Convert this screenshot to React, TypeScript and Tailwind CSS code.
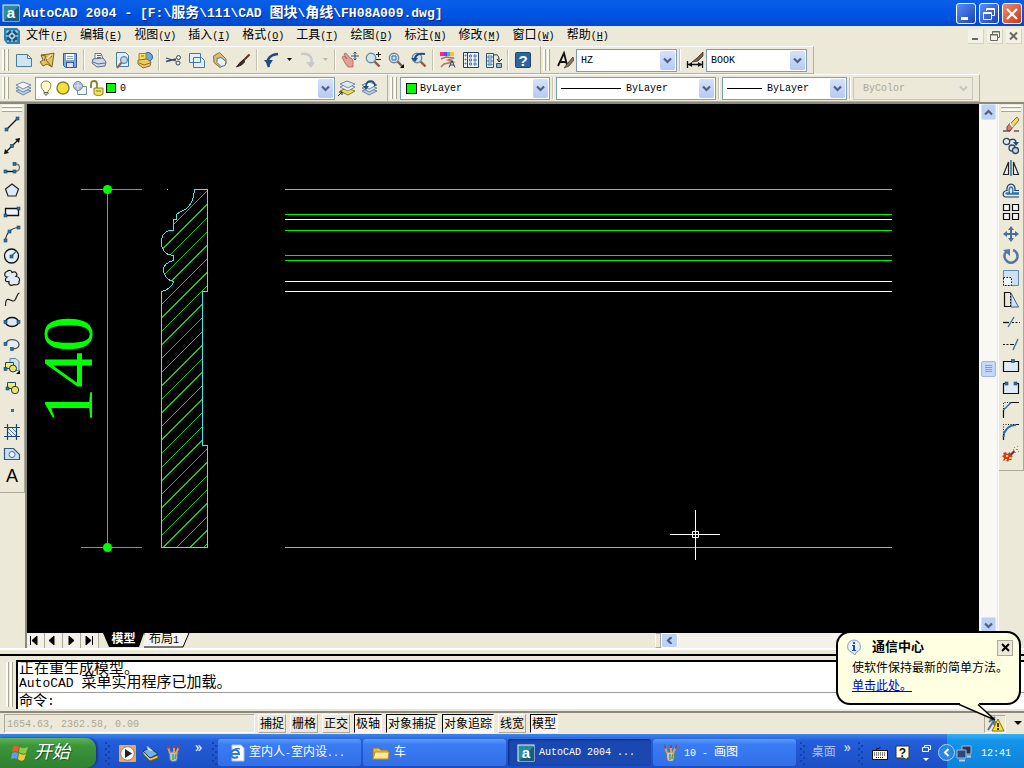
import React from 'react';

const SHADE = '#33495f';
const BLUE = '#2f6ea5';
const PALE = '#d3e3f5';

// CJK runs are set a little larger than the monospaced latin around them
const Mixed: React.FC<{ text: string; cjk?: string }> = ({ text, cjk = 'text-[12px]' }) => (
  <>
    {text.split(/([\u3000-\u9fff]+)/).map((part, i) =>
      i % 2 ? <span key={i} className={cjk}>{part}</span> : part
    )}
  </>
);

const Icon: React.FC<{ children: React.ReactNode }> = ({ children }) => (
  <svg width="18" height="18" viewBox="0 0 18 18" fill="none" stroke={SHADE} className="block shrink-0">
    {children}
  </svg>
);

const Node: React.FC<{ x: number; y: number }> = ({ x, y }) => (
  <rect x={x - 1.5} y={y - 1.5} width="3" height="3" fill={BLUE} stroke="#17456f" strokeWidth="0.6" />
);

const lens = (
  <>
    <path d="M10.5 10.5l5 5" stroke="#8b5a3c" strokeWidth="2.4" />
    <circle cx="7" cy="7" r="4.7" fill={PALE} stroke="#71889c" strokeWidth="1.4" />
  </>
);

const layerStack = (
  <>
    <path d="M1 12l7-3 8 3-8 4z" fill="#b9cde0" stroke="#54748f" strokeWidth="0.8" />
    <path d="M1 9l7-3 8 3-8 4z" fill="#d7e4ef" stroke="#54748f" strokeWidth="0.8" />
    <path d="M1 6l7-3 8 3-8 4z" fill="#eef4fa" stroke="#54748f" strokeWidth="0.8" />
  </>
);

type Tool = { name: string; art: React.ReactNode };

const fileTools: Tool[] = [
  { name: '新建', art: <path d="M1.5 3.5h11l4 4v8h-15zM12.5 3.5v4h4" fill="#cfe5f3" stroke="#4b7d9c" /> },
  {
    name: '打开',
    art: (
      <>
        <path d="M3 4l8-1 5-1-2 14-5-3-4 2-3-4 3-2z" fill="#e3c262" stroke="#7d6428" />
        <path d="M3 4l5 1-2 5M8 9l6 7M8 9l6-4" stroke="#7d6428" />
        <path d="M13 4l-4 4" stroke="#fff3b5" strokeWidth="1.500" />
      </>
    ),
  },
  {
    name: '保存',
    art: (
      <>
        <path d="M2.500 2.500h13v14h-11l-2-2z" fill="#7fa8d6" stroke="#315d92" />
        <rect x="5" y="3" width="8" height="6" fill="#f5f8fc" stroke="none" />
        <path d="M6 5.500h6M6 7.500h6" stroke="#8aa3bd" />
        <rect x="5.500" y="11.500" width="7" height="5" fill="#dbe5f0" stroke="#315d92" />
      </>
    ),
  },
];

const printTools: Tool[] = [
  {
    name: '打印',
    art: (
      <>
        <path d="M5 8V2.500h6l2 5" fill="#fff" stroke="#65758d" />
        <path d="M3 8l10-1 3 4-1 4-8 1-5-4z" fill="#d2d9ea" stroke="#5e6d8a" />
        <path d="M3 11l5 2 7-1M7 4.500h4M7 6.500h4" stroke="#5e6d8a" />
      </>
    ),
  },
  {
    name: '打印预览',
    art: (
      <>
        <path d="M3.500 1.500h9l3 3v11h-12z" fill="#e3effa" stroke="#4679a1" />
        <path d="M9 11l-5 6" stroke="#995f3f" strokeWidth="2" />
        <circle cx="11" cy="9" r="3.500" fill="#bfd8ee" stroke="#52728f" />
      </>
    ),
  },
  {
    name: '发布',
    art: (
      <>
        <circle cx="12" cy="6" r="4.500" fill="#6ba9df" stroke="#31639b" />
        <path d="M3 9V2.500h7V9" fill="#f8df55" stroke="#a2842a" />
        <path d="M2 9l9-1 4 3-1 4-7 2-5-4z" fill="#eccb63" stroke="#8a6d2d" />
        <path d="M3 12l5 2 6-2M5 5h3" stroke="#8a6d2d" />
      </>
    ),
  },
];

const editTools: Tool[] = [
  {
    name: '剪切',
    art: (
      <>
        <path d="M1 7l10 3M1 10.500l10-2.500" strokeWidth="1.300" />
        <circle cx="13.500" cy="6.500" r="2" />
        <circle cx="13" cy="12" r="2" />
      </>
    ),
  },
  {
    name: '复制',
    art: <path d="M1.500 2.500h11v9h-11zM5.500 6.500h8l3 3v7h-11z" fill="#e2effa" stroke="#42799f" />,
  },
  {
    name: '粘贴',
    art: (
      <>
        <path d="M2.500 5l6-3.500L15 8v5l-6 3.500-6-5z" fill="#dfbc6d" stroke="#8b6e39" />
        <path d="M6 7.500l4-1 5 4-1 4-4 1-4-4z" fill="#e8f2fb" stroke="#4a7b9e" />
      </>
    ),
  },
  {
    name: '特性匹配',
    art: (
      <>
        <path d="M15.500 3.500L9 10" stroke="#59391f" strokeWidth="2.200" />
        <path d="M9.500 9l-3 2-4 5 5-2 3-3z" fill="#3c2b22" stroke="#2a211c" />
      </>
    ),
  },
];

const viewTools: Tool[] = [
  {
    name: '实时平移',
    art: (
      <>
        <path d="M1 6l2-1 3 3-3-5 2-1 4 5 1 0 2 2v7l-5 0-3-4z" fill="#e0a197" stroke="#a96055" strokeWidth="0.8" />
        <path d="M14 1v8M10 5h8M12.500 2.500L14 1l1.500 1.500M12.500 7.500L14 9l1.500-1.500" stroke="#2b5177" />
      </>
    ),
  },
  { name: '实时缩放', art: <>{lens}<path d="M14.500 1v5M12 3.500h5M12 8.500h5" stroke="#222" /></> },
  { name: '窗口缩放', art: <>{lens}<path d="M5 5h4v4H5z" stroke={BLUE} /><path d="M13 17l4-4v4z" fill="#000" stroke="none" /></> },
  {
    name: '缩放上一个',
    art: (
      <>
        {lens}
        <path d="M5 8c0-4 4-6 10-5" stroke="#204d7d" strokeWidth="2.200" />
        <path d="M1 7h7l-3 4z" fill="#204d7d" stroke="none" />
      </>
    ),
  },
];

const paletteTools: Tool[] = [
  {
    name: '特性',
    art: (
      <>
        <g stroke="none">
          <path d="M1 1h4v4H1z" fill="#f32d8b" />
          <path d="M5 1h3v4H5z" fill="#8536e8" />
          <path d="M8 1h3v4H8z" fill="#25b7ee" />
          <path d="M11 1h4v4h-4z" fill="#f7c424" />
        </g>
        <path d="M2 8l5-2 8 1-6 2 5 2-9 2-3 3" stroke="#b07568" strokeWidth="1.600" />
        <path d="M10 16.500l3-7 3 7M11 14h4" stroke="#28455f" />
      </>
    ),
  },
  {
    name: '设计中心',
    art: (
      <>
        <path d="M1.500 1.500h15v15h-15z" fill="#eef4fb" stroke="#1f3f66" />
        <path d="M5.500 1.500v15" stroke="#1f3f66" />
        <path d="M7.500 4h2v2h-2zM12 4h2v2h-2zM7.500 8h2v2h-2zM12 8h2v2h-2zM7.500 12h2v2h-2zM12 12h2v2h-2zM3 4h1v1H3zM3 8h1v1H3zM3 12h1v1H3z" stroke="#426b96" strokeWidth="0.900" />
      </>
    ),
  },
  {
    name: '工具选项板',
    art: (
      <>
        <path d="M1.500 2.500h7v14h-7z" fill="#e4eef8" stroke="#2a4f78" />
        <path d="M3 5h4v2H3zM3 9h4v2H3zM3 13h4v1H3z" stroke="#527ba4" />
        <path d="M9 4c4-1 5 1 5 6M12 8l2 3 3-3" stroke="#17283b" />
        <path d="M11.500 12.500h5v4h-5z" fill="#94b3d5" stroke="#33526f" />
      </>
    ),
  },
];

const drawTools: Tool[] = [
  { name: '直线', art: <><path d="M3.500 14.500l11-11" stroke="#111" strokeWidth="1.300" /><Node x={3.5} y={14.5} /><Node x={14.5} y={3.5} /></> },
  {
    name: '构造线',
    art: (
      <>
        <path d="M2 16L16 2" stroke="#111" strokeWidth="1.300" />
        <path d="M1 17l1-5 4 4zM17 1l-5 1 4 4z" fill="#111" stroke="none" />
        <Node x={9} y={9} />
      </>
    ),
  },
  { name: '多段线', art: <><path d="M2.500 12.500h9" stroke="#111" strokeWidth="1.400" /><path d="M12 5c6 0 6 7 0 7.500" stroke="#777" strokeWidth="1.400" /><Node x={2.5} y={12.5} /><Node x={11.5} y={12.5} /><Node x={11.5} y={5} /></> },
  { name: '正多边形', art: <path d="M9 3l6.500 5-2.500 7H5L2.500 8z" fill="#e0eaf7" stroke="#222" strokeWidth="1.200" /> },
  { name: '矩形', art: <><path d="M2.500 5.500h13v7h-13z" fill="#f0f5fc" stroke="#111" strokeWidth="1.300" /><Node x={2.5} y={12.5} /><Node x={15.5} y={5.5} /></> },
  { name: '圆弧', art: <><path d="M2.500 15.500C3 8 8 3 15.500 2.500" stroke="#333" strokeWidth="1.200" /><Node x={2.5} y={15.5} /><Node x={6.5} y={6.5} /><Node x={15.5} y={2.5} /></> },
  { name: '圆', art: <><circle cx="8.500" cy="9" r="7" fill="#e2edf9" stroke="#111" strokeWidth="1.300" /><path d="M8.500 9l5-5" stroke={BLUE} strokeWidth="1.400" /><Node x={8.5} y={9.5} /></> },
  {
    name: '修订云线',
    art: <path d="M4 8C1 8 1 3 4 2.500c2-2 5-1 5 1 4-2 6 2 4 4 4 0 4 4 3 5 1 3-3 4-5 3-3 2-6 0-5-3-5 1-4-3-2-4.500z" fill="#e3ebf8" stroke="#222" strokeWidth="1.200" />,
  },
  { name: '样条曲线', art: <path d="M2.500 15c0-11 5-5 8-5s3-8 6-8" stroke="#222" strokeWidth="1.200" /> },
  { name: '椭圆', art: <><ellipse cx="9" cy="9" rx="6.500" ry="4.500" fill="#dce8f7" stroke="#111" strokeWidth="1.400" /><Node x={2.5} y={9} /><Node x={15.5} y={9} /></> },
  { name: '椭圆弧', art: <><path d="M3 9c0-6 13-6 13 1 0 3-4 4-7 3.500" fill="#e4eef9" stroke="#555" strokeWidth="1.400" /><Node x={2.5} y={9} /><Node x={9} y={14} /></> },
  {
    name: '插入块',
    art: (
      <>
        <path d="M7 1.500h6l3 3v9H7z" fill="#cde0f2" stroke="#5c86ac" />
        <path d="M2.500 5.500h8v6h-8z" fill="#f2ed69" stroke="#1d466f" />
        <circle cx="10" cy="11.500" r="3.500" fill="#e8e36b" stroke="#333" />
        <Node x={2.5} y={12} />
        <path d="M13 17l4-4v4z" fill="#000" stroke="none" />
      </>
    ),
  },
  { name: '创建块', art: <><path d="M4.500 3.500h8v6h-8z" fill="#f2ed69" stroke="#1d466f" /><circle cx="12" cy="11" r="3.700" fill="#e8e36b" stroke="#333" /><Node x={4.5} y={9.5} /></> },
  { name: '点', art: <rect x="8" y="8" width="3" height="3" fill={BLUE} stroke="none" /> },
  {
    name: '图案填充',
    art: (
      <>
        <path d="M4 4h10v10H4z" fill="#e5effa" stroke="none" />
        <path d="M4 4l10 10M8 4l6 6M4 8l6 6M12 4l2 2M4 12l2 2" stroke="#47749f" />
        <path d="M1 4.500h16M1 13.500h16M4.500 1v16M13.500 1v16" stroke="#1f4266" strokeWidth="1.200" />
      </>
    ),
  },
  { name: '面域', art: <><path d="M1.500 3.500h9l6 6v5h-15z" fill="#cbdff2" stroke="#2b5a85" strokeWidth="1.200" /><circle cx="9" cy="9.500" r="3" fill="#e9f1fa" stroke="#4a6f92" /></> },
];

const modifyTools: Tool[] = [
  {
    name: '删除',
    art: (
      <>
        <path d="M1 16h7M12 16h5" stroke="#111" />
        <path d="M9 8l6-6 2 3-6 7z" fill="#f5d95e" stroke="#83702c" />
        <path d="M5 12l3-4 3 4-3 4-3-1z" fill="#d97a76" stroke="#7d3b37" />
        <path d="M8 8l3 4" stroke="#fff" strokeWidth="1.500" />
      </>
    ),
  },
  {
    name: '复制对象',
    art: (
      <>
        <circle cx="4.500" cy="4.500" r="3.200" fill="#dfe6ee" strokeWidth="1.300" />
        <circle cx="10" cy="11" r="3" fill="#dfe6ee" strokeWidth="1.300" />
        <circle cx="13.500" cy="13.500" r="3" fill="#c8d4e1" strokeWidth="1.300" />
        <path d="M8 3c4-2 6 0 6 3" stroke="#174f84" strokeWidth="1.500" />
        <path d="M11 5h6l-3 4z" fill="#174f84" stroke="none" />
      </>
    ),
  },
  { name: '镜像', art: <><path d="M6.500 3v12.500h-5zM11.500 3v12.500h5z" fill="#eef2f6" stroke="#222" strokeWidth="1.200" /><path d="M9 1v16" stroke={BLUE} strokeWidth="1.500" /></> },
  {
    name: '偏移',
    art: (
      <>
        <path d="M17 16H4c-4 0-4-6 1-6.500C4 1 14 1 13 9.500h4" fill="#dce9f6" stroke="#243b54" strokeWidth="1.200" />
        <path d="M17 13H5c-2-.5-1-1.500 2.500-1-2-8 5-8 3 0H17" stroke={BLUE} strokeWidth="1.300" />
      </>
    ),
  },
  { name: '阵列', art: <path d="M1.500 1.500h6v6h-6zM10.500 1.500h6v6h-6zM1.500 10.500h6v6h-6zM10.500 10.500h6v6h-6z" fill="#f2f5f9" stroke="#111" strokeWidth="1.200" /> },
  { name: '移动', art: <><path d="M9 3v12M3 9h12" stroke="#486e9c" strokeWidth="2" /><path d="M9 1l3 4H6zM9 17l3-4H6zM1 9l4-3v6zM17 9l-4-3v6z" fill="#486e9c" stroke="none" /></> },
  { name: '旋转', art: <><path d="M4 5a6.500 6.500 0 1 0 7-2" stroke="#5576a0" strokeWidth="2.500" /><path d="M1 3l7-1v7z" fill="#5576a0" stroke="none" /></> },
  { name: '缩放', art: <><path d="M1.500 1.500h15v15h-15z" fill="#cfe0f1" stroke="#638ab0" /><path d="M1.500 8.500h8v8h-8z" fill="#eff4fa" stroke="#111" strokeDasharray="1.500 1.500" /></> },
  { name: '拉伸', art: <><path d="M9 2l7.500 14H9z" fill="#d0e0ef" stroke="#3d6388" /><path d="M8.500 1.500h-6v14h6" stroke="#111" strokeWidth="1.200" /><path d="M8.500 2v14" stroke="#111" strokeDasharray="1.500 1.500" /></> },
  { name: '修剪', art: <><path d="M1 9.500h6" stroke="#111" strokeWidth="1.300" /><path d="M6 14l6-10" stroke={BLUE} strokeWidth="1.300" /><path d="M10 9.500h8" stroke="#111" strokeDasharray="2 1.500" /></> },
  { name: '延伸', art: <><path d="M1 9.500h9" stroke="#111" strokeDasharray="2 1.500" /><path d="M8 9.500h4" stroke="#111" /><path d="M11 15l5-11" stroke={BLUE} strokeWidth="1.300" /></> },
  { name: '打断于点', art: <><path d="M1.500 4.500h15v10h-15z" fill="#e0ebf7" stroke="#111" strokeWidth="1.200" /><Node x={11} y={4} /></> },
  { name: '打断', art: <><path d="M1.500 4.500h15v10h-15z" fill="#e0ebf7" stroke="none" /><path d="M4 4.500H1.500v10h15v-10H14" stroke="#111" strokeWidth="1.200" /><Node x={4.5} y={4.5} /><Node x={13.5} y={4.5} /></> },
  { name: '倒角', art: <><path d="M1.500 17v-8M9 1.500h8" stroke="#111" strokeWidth="1.200" /><path d="M1.500 9L9 1.500" stroke={BLUE} strokeWidth="1.500" /><path d="M1.500 8V1.500H9" stroke="#111" strokeDasharray="1 1.500" /></> },
  { name: '圆角', art: <><path d="M1.500 17v-4M13 1.500h4" stroke="#111" strokeWidth="1.200" /><path d="M1.500 14C2 7 7 2 14 2" stroke={BLUE} strokeWidth="2" /><path d="M1.500 12V1.500H13" stroke="#111" strokeDasharray="1 1.500" /></> },
  {
    name: '分解',
    art: (
      <g stroke="none">
        <path d="M1 8l3-1 1 2 3-2 1 3 2 1-2 2 1 2h-3l-1 2-2-2-3 1 1-3-2-2 2-1z" fill="#d23c23" />
        <path d="M4 10h2v2H4zM7 12h2v2H7zM3 14h2v1H3z" fill="#ffd84a" />
        <path d="M8 9l4-4 1 2-4 4z" fill="#7a2c1d" />
        <path d="M12 2h1v1h-1zM15 1h1v1h-1zM14 4h2v1h-2zM16 6h1v1h-1zM11 4h1v1h-1zM13 7h1v1h-1z" fill="#8391a8" />
      </g>
    ),
  },
];

const ToolButton: React.FC<{ tool: Tool }> = ({ tool }) => (
  <button type="button" aria-label={tool.name} title={tool.name} className="flex h-[22px] w-[23px] shrink-0 items-center justify-center">
    <Icon>{tool.art}</Icon>
  </button>
);

const ToolGroup: React.FC<{ tools: Tool[] }> = ({ tools }) => (
  <div className="flex">{tools.map((tool) => <ToolButton key={tool.name} tool={tool} />)}</div>
);

const Separator: React.FC = () => <div className="mx-[2px] h-[22px] w-[2px] shrink-0 border-l border-[#c5c2b2] bg-white" />;

const Grip: React.FC = () => (
  <div className="flex w-[12px] shrink-0 gap-[1px] self-stretch py-[2px] pl-[2px]">
    <div className="w-[3px] border-r border-[#a9a691] bg-[#fbfaf4]" />
    <div className="w-[3px] border-r border-[#a9a691] bg-[#fbfaf4]" />
  </div>
);

const FlatGrip: React.FC = () => (
  <div className="flex h-[9px] w-full flex-col gap-[1px] px-[2px] pt-[1px]">
    <div className="h-[3px] border-b border-[#a9a691] bg-[#fbfaf4]" />
    <div className="h-[3px] border-b border-[#a9a691] bg-[#fbfaf4]" />
  </div>
);

const Bar: React.FC<{ children: React.ReactNode }> = ({ children }) => (
  <div className="flex h-[28px] shrink-0 items-center border-t border-r border-b border-t-white border-r-[#b3b09d] border-b-[#b3b09d] pr-[6px]">
    <Grip />
    {children}
  </div>
);

const Chevron: React.FC<{ dir: 'up' | 'down' | 'left'; faded?: boolean }> = ({ dir, faded }) => (
  <svg width="9" height="7" viewBox="0 0 9 7" fill="none" stroke={faded ? '#c9c7ba' : '#4d6185'} strokeWidth="2.200">
    <path d={dir === 'down' ? 'M1 1.500l3.500 3.500L8 1.500' : dir === 'up' ? 'M1 5.500L4.500 2 8 5.500' : 'M6.500 0L3 3.500 6.500 7'} />
  </svg>
);

type ComboProps = { label: string; value: string; size: string; pad: string; disabled?: boolean; children?: React.ReactNode };

const Combo: React.FC<ComboProps> = ({ label, value, size, pad, disabled, children }) => (
  <div className={`relative h-[23px] shrink-0 ${size}`}>
    <select
      aria-label={label}
      disabled={disabled}
      className={`h-full w-full appearance-none border ${pad} ${disabled ? 'border-[#c9c7ba] bg-[#ece9d8] text-[#aca899] opacity-100' : 'border-[#7f9db9] bg-white text-black'}`}
    >
      <option>{value}</option>
    </select>
    <div className="pointer-events-none absolute inset-y-0 left-0 flex items-center">{children}</div>
    <div className={`pointer-events-none absolute inset-y-[2px] right-[2px] flex w-[15px] items-center justify-center rounded-[2px] ${disabled ? 'bg-[#ebe9dc]' : 'bg-linear-to-b from-[#d5e1fc] to-[#b6c9f4]'}`}>
      <Chevron dir="down" faded={disabled} />
    </div>
  </div>
);

const AppLogo: React.FC = () => (
  <svg width="18" height="18" viewBox="0 0 18 18" className="shrink-0">
    <rect x="1" y="1" width="16" height="16" fill="#2c8a9c" stroke="#e8f6f8" />
    <path d="M2 17L17 2v15z" fill="#175f78" />
    <text x="9" y="14" textAnchor="middle" fontFamily="Liberation Sans, sans-serif" fontWeight="700" fontSize="15" fill="#fff">a</text>
  </svg>
);

const menus = [
  ['文件', 'F'], ['编辑', 'E'], ['视图', 'V'], ['插入', 'I'], ['格式', 'O'], ['工具', 'T'],
  ['绘图', 'D'], ['标注', 'N'], ['修改', 'M'], ['窗口', 'W'], ['帮助', 'H'],
];

const TitleBar: React.FC = () => (
  <header className="flex h-[26px] shrink-0 items-center justify-between bg-linear-to-b from-[#0a5fe8] via-[#0055e5] to-[#0148cf] px-[2px]">
    <div className="flex items-center gap-[3px]">
      <AppLogo />
      <h1 className="text-[13px] font-bold whitespace-pre text-white [text-shadow:1px_1px_#0a2a7a]">
        <Mixed text={'AutoCAD 2004 - [F:\\服务\\111\\CAD 图块\\角线\\FH08A009.dwg]'} cjk="text-[14px]" />
      </h1>
    </div>
    <div className="flex gap-[3px]">
      <button type="button" aria-label="最小化" className="h-[21px] w-[20px] rounded-[3px] border border-white bg-linear-to-br from-[#5c8df5] to-[#1941b8]">
        <svg width="18" height="19" viewBox="0 0 18 19"><path d="M4 13h7v3H4z" fill="#fff" /></svg>
      </button>
      <button type="button" aria-label="还原" className="h-[21px] w-[20px] rounded-[3px] border border-white bg-linear-to-br from-[#5c8df5] to-[#1941b8]">
        <svg width="18" height="19" viewBox="0 0 18 19" fill="none" stroke="#fff"><path d="M6.500 7V4.500h8v7H12M6 5.500h9" /><path d="M3.500 8.500h8v7h-8zM3 9.500h9" /></svg>
      </button>
      <button type="button" aria-label="关闭" className="h-[21px] w-[20px] rounded-[3px] border border-white bg-linear-to-br from-[#ee8a6c] to-[#c8330c]">
        <svg width="18" height="19" viewBox="0 0 18 19" stroke="#fff" strokeWidth="2.200"><path d="M4 5l10 10M14 5L4 15" /></svg>
      </button>
    </div>
  </header>
);

const MenuBar: React.FC = () => (
  <nav className="flex h-[20px] shrink-0 items-center justify-between pr-[2px] pl-[4px]">
    <div className="flex items-center">
      <svg width="16" height="16" viewBox="0 0 16 16" className="mr-[6px]">
        <path d="M0 0h13l3 3v13H3l-3-4z" fill="#2c7fae" />
        <path d="M3 3h10v10H3z" fill="#15557f" />
        <path d="M8 2v12M2 8h12" stroke="#d8f1fb" />
        <path d="M6 6h4v4H6z" fill="#0f4b70" stroke="#fff" />
        <path d="M3 3h2M3 3v2M13 3h-2M13 3v2M3 13h2M13 13h-2" stroke="#d8f1fb" />
      </svg>
      <div className="flex gap-[12px]">
        {menus.map(([title, key]) => (
          <button type="button" key={key} className="leading-[18px] whitespace-nowrap">
            <span className="text-[12px]">{title}</span>(<u>{key}</u>)
          </button>
        ))}
      </div>
    </div>
    <div className="flex gap-[3px]">
      <button type="button" aria-label="最小化窗口" className="h-[15px] w-[16px] border-r border-b border-[#d5d2c0] bg-[#f4f2e8]">
        <svg width="15" height="14" viewBox="0 0 15 14"><path d="M4 9h6v2H4z" fill="#6b6a60" /></svg>
      </button>
      <button type="button" aria-label="还原窗口" className="h-[15px] w-[16px] border-r border-b border-[#d5d2c0] bg-[#f4f2e8]">
        <svg width="15" height="14" viewBox="0 0 15 14" fill="none" stroke="#6b6a60"><path d="M5.500 5V2.500h7v6H11M5 3h8M3.500 5.500h7v6h-7zM3 6h8" /></svg>
      </button>
      <button type="button" aria-label="关闭窗口" className="h-[15px] w-[16px] border-r border-b border-[#d5d2c0] bg-[#f4f2e8]">
        <svg width="15" height="14" viewBox="0 0 15 14" stroke="#6b6a60" strokeWidth="2"><path d="M4 3.500l7 7M11 3.500l-7 7" /></svg>
      </button>
    </div>
  </nav>
);

const DropArrow: React.FC<{ name: string; color: string }> = ({ name, color }) => (
  <button type="button" aria-label={name} className="flex h-[22px] w-[13px] items-center justify-center">
    <svg width="6" height="4" viewBox="0 0 6 4"><path d="M0 0h5L2.500 3z" fill={color} /></svg>
  </button>
);

const StandardBar: React.FC = () => (
  <div className="flex">
    <Bar>
      <ToolGroup tools={fileTools} />
      <Separator />
      <ToolGroup tools={printTools} />
      <Separator />
      <ToolGroup tools={editTools} />
      <Separator />
      <ToolButton tool={{ name: '放弃', art: <><path d="M6 16c-3-6-1-12 9-13" stroke="#1e4a86" strokeWidth="2.600" /><path d="M1 9h9l-4 6z" fill="#1e4a86" stroke="none" /></> }} />
      <DropArrow name="放弃列表" color="#111" />
      <ToolButton tool={{ name: '重做', art: <><path d="M2 3c9-1 12 4 10 9" stroke="#c8c9cb" strokeWidth="2.500" /><path d="M7 11h9l-4 6z" fill="#c8c9cb" stroke="none" /></> }} />
      <DropArrow name="重做列表" color="#b9b7aa" />
      <Separator />
      <ToolGroup tools={viewTools} />
      <Separator />
      <ToolGroup tools={paletteTools} />
      <Separator />
      <ToolButton
        tool={{
          name: '帮助主题',
          art: (
            <>
              <rect x="1.500" y="1.500" width="15" height="15" rx="1" fill="#2b659f" stroke="#174676" />
              <text x="9" y="14.500" textAnchor="middle" fontFamily="Liberation Sans, sans-serif" fontWeight="700" fontSize="15" fill="#fff" stroke="none">?</text>
            </>
          ),
        }}
      />
    </Bar>
    <Bar>
      <ToolButton
        tool={{
          name: '文字样式',
          art: (
            <>
              <path d="M2 15L8 2l3 12M4 11h6" stroke="#111" strokeWidth="1.800" />
              <path d="M17 6l-6 7-3 4 5-2 5-6z" fill="#8a7350" stroke="#3d3428" strokeWidth="0.700" />
            </>
          ),
        }}
      />
      <Combo label="文字样式控制" value="HZ" size="w-[101px]" pad="pl-[4px]" />
      <Separator />
      <ToolButton
        tool={{
          name: '标注样式',
          art: (
            <>
              <path d="M1.500 10v7M16.500 10v7M2 13.500h14" stroke="#111" strokeWidth="1.300" />
              <path d="M2 13.500l4-2.500v5zM16 13.500L12 11v5z" fill="#111" stroke="none" />
              <path d="M17 1l-6 6-5 4 6-1 5-5z" fill="#7b6142" stroke="#2f2820" strokeWidth="0.700" />
            </>
          ),
        }}
      />
      <Combo label="标注样式控制" value="BOOK" size="w-[101px]" pad="pl-[4px]" />
    </Bar>
  </div>
);

const layerIcons = (
  <svg width="80" height="18" viewBox="0 0 80 18" className="ml-[3px]">
    <path d="M6 12c-5-4-3-10 2-10s7 6 2 10v3H6z" fill="#fdf9c0" stroke="#8d8440" />
    <path d="M6 13.500h4M7 16h2" stroke="#666" />
    <circle cx="25" cy="9" r="6" fill="#f6e233" stroke="#8b8040" strokeWidth="1.500" />
    <path d="M39.500 7.500h9v8h-9z" fill="#f4f7fa" stroke="#748ba1" />
    <circle cx="40" cy="7" r="4.500" fill="#a8bdcd" stroke="#6e8799" />
    <path d="M36 7h8M40 3v8" stroke="#e1ebf2" />
    <path d="M53 9V5c0-4 6-4 6 0v4" fill="none" stroke="#8c7f24" strokeWidth="1.800" />
    <path d="M56 9h9v6c-2 2-7 2-9 0z" fill="#f0e35a" stroke="#8c7f24" />
    <path d="M58 12h5" stroke="#8c7f24" />
    <rect x="68.500" y="4.500" width="9" height="9" fill="#0f0" stroke="#000" />
  </svg>
);

const PropertyBar: React.FC = () => (
  <div className="flex">
    <Bar>
      <ToolButton tool={{ name: '图层特性管理器', art: layerStack }} />
      <Combo label="图层控制" value="0" size="w-[300px]" pad="pl-[84px]">{layerIcons}</Combo>
      <ToolButton
        tool={{
          name: '将对象的图层置为当前',
          art: (
            <>
              <path d="M2 12l7-3 8 3-7 4z" fill="#f0dd55" stroke="#847933" />
              <path d="M2 8l7-3 8 3-7 4z" fill="#f5f7f9" stroke="#54748f" strokeWidth="0.800" />
              <path d="M2 5l7-3 8 3-7 4z" fill="#dfe9f2" stroke="#54748f" strokeWidth="0.800" />
              <path d="M0 17l4-4M1 13h3v3" stroke="#16283b" />
            </>
          ),
        }}
      />
      <ToolButton tool={{ name: '上一个图层', art: <>{layerStack}<path d="M5 8c-1-7 9-8 9-1" stroke="#1e4e83" strokeWidth="1.800" /><path d="M2 7h6l-3 4z" fill="#1e4e83" stroke="none" /></> }} />
    </Bar>
    <Bar>
      <Combo label="颜色控制" value="ByLayer" size="w-[150px]" pad="pl-[19px]">
        <span className="ml-[6px] h-[11px] w-[11px] border border-black bg-[#0f0]" />
      </Combo>
      <Separator />
      <Combo label="线型控制" value="ByLayer" size="w-[160px]" pad="pl-[69px]">
        <span className="ml-[5px] h-px w-[60px] bg-black" />
      </Combo>
      <Separator />
      <Combo label="线宽控制" value="ByLayer" size="w-[125px]" pad="pl-[44px]">
        <span className="ml-[5px] h-px w-[35px] bg-black" />
      </Combo>
      <Separator />
      <Combo label="打印样式控制" value="ByColor" size="w-[120px]" pad="pl-[9px]" disabled />
    </Bar>
  </div>
);

const SideBar: React.FC<{ tools: Tool[]; children?: React.ReactNode }> = ({ tools, children }) => (
  <div className="w-[25px] shrink-0">
    <div className="flex flex-col items-center border-r border-b border-[#aca899] pb-[5px]">
      <FlatGrip />
      {tools.map((tool) => <ToolButton key={tool.name} tool={tool} />)}
      {children}
    </div>
  </div>
);

const PROFILE =
  'M194.500 189.500H207.500V291.500H202.500V445.500H207.500V547.500H161.500V291.500C168 290 172 287 173.500 281.500C167 280 163.500 275 163.500 269C164 264 168 262 173.500 260.500V255.500L168 254.500C164 252 161.500 248 161.500 243C161 237 164 232 168 231L173.500 230.500V219.500H176.500V214.500C180 211 183 211 186 209C191 205 194 200 194.500 189.500Z';

const RULES = [
  { y: 189.5, color: '#3fd6d6' }, { y: 214.5, color: '#0e0' }, { y: 219.5, color: '#fff' },
  { y: 230.5, color: '#0e0' }, { y: 255.5, color: '#0e0' }, { y: 260.5, color: '#0e0' },
  { y: 281.5, color: '#fff' }, { y: 291.5, color: '#fff' }, { y: 547.5, color: '#3fd6d6' },
];

const Drawing: React.FC = () => (
  <svg className="min-h-0 w-full flex-1" fill="none" role="img" aria-label="FH08A009">
    <g transform="translate(-27 -104)">
      <clipPath id="profile"><path d={PROFILE} /></clipPath>
      <g clipPath="url(#profile)" stroke="#22c322" shapeRendering="crispEdges">
        {Array.from({ length: 32 }, (_, i) => {
          const sum = 398 + i * 13.58;
          return <path key={i} d={`M220 ${sum - 220}L150 ${sum - 150}`} />;
        })}
      </g>
      <path d={PROFILE} stroke="#4de3e3" shapeRendering="crispEdges" />
      {RULES.map((rule) => <path key={rule.y} d={`M285 ${rule.y}H892`} stroke={rule.color} />)}
      <path d="M81 189.500H142M81 547.500H142M107.500 189V548" stroke="#0e0" />
      <circle cx="107.500" cy="189.500" r="4.500" fill="#0f0" />
      <circle cx="107.500" cy="547.500" r="4.500" fill="#0f0" />
      <path d="M167 189.500h1" stroke="#ccc" />
      <text transform="translate(92 424) rotate(-90)" fontFamily="Liberation Serif, serif" fontSize="72" fill="#0f0">140</text>
      <path d="M670 534.500H720M695.500 510V560" stroke="#fff" />
      <path d="M692.500 531.500h6v6h-6z" stroke="#fff" />
    </g>
  </svg>
);

const sheetNav = [
  { name: '第一个', d: 'M3.500 3v9M10 3v9L5 7.500z' },
  { name: '上一个', d: 'M9 3v9L4 7.500z' },
  { name: '下一个', d: 'M6 3v9l5-4.500z' },
  { name: '最后一个', d: 'M5 3v9l5-4.500zM11.500 3v9' },
];

const SheetTabs: React.FC = () => (
  <div className="flex h-[15px] shrink-0 items-stretch bg-[#ece9d8]">
    {sheetNav.map((nav) => (
      <button type="button" key={nav.name} aria-label={nav.name} className="w-[18px] border-r border-[#aca899] bg-[#f3f1e7]">
        <svg width="16" height="15" viewBox="0 0 16 15" fill="#000" stroke="#000"><path d={nav.d} /></svg>
      </button>
    ))}
    <div className="ml-[4px] flex">
      <div className="relative w-[41px]">
        <svg width="41" height="15" viewBox="0 0 41 15" className="absolute inset-0"><path d="M0 0h41l-5 14H6z" fill="#000" /></svg>
        <button type="button" className="relative block w-full text-center text-[12px] leading-[14px] font-bold text-white">模型</button>
      </div>
      <div className="relative w-[46px]">
        <svg width="46" height="15" viewBox="0 0 46 15" className="absolute inset-0"><path d="M0 0l-2 14h41L45 0" fill="#f5f3ea" stroke="#000" /></svg>
        <button type="button" className="relative block w-full pr-[6px] text-center leading-[14px]"><Mixed text="布局1" /></button>
      </div>
    </div>
    <div className="ml-auto flex w-[324px] bg-[#f3f1e8]">
      <div className="w-[6px] border border-[#aca899] border-l-white bg-[#ece9d8]" />
      <button type="button" aria-label="向左滚动" className="flex w-[17px] items-center justify-center rounded-[2px] border border-white bg-[#c0d1f8]">
        <Chevron dir="left" />
      </button>
    </div>
  </div>
);

const Workspace: React.FC = () => (
  <main className="flex min-h-[545px] flex-1 border-t-2 border-[#8b897b]">
    <SideBar tools={drawTools}>
      <button type="button" aria-label="多行文字" className="h-[22px] w-[23px] text-center font-['Liberation_Sans',sans-serif] text-[18px] leading-[22px]">A</button>
    </SideBar>
    <div className="flex min-w-0 flex-1 flex-col border-l-2 border-[#8b897b] bg-[#ece9d8]">
      <div className="flex min-h-0 flex-1">
        <div className="flex min-w-0 flex-1 flex-col bg-black"><Drawing /></div>
        <div className="flex w-[18px] shrink-0 flex-col items-center justify-between bg-[#f9f8f2]">
          <button type="button" aria-label="向上滚动" className="flex h-[16px] w-[15px] items-center justify-center rounded-[2px] border border-[#d7e0f5] bg-[#c0d1f8]"><Chevron dir="up" /></button>
          <button type="button" aria-label="滚动块" className="flex h-[16px] w-[15px] flex-col items-center justify-center gap-[1px] rounded-[2px] border border-[#9db6ea] bg-[#c7d7fb]">
            <span className="h-px w-[7px] bg-[#7f9be0]" />
            <span className="h-px w-[7px] bg-[#7f9be0]" />
            <span className="h-px w-[7px] bg-[#7f9be0]" />
            <span className="h-px w-[7px] bg-[#7f9be0]" />
          </button>
          <button type="button" aria-label="向下滚动" className="flex h-[16px] w-[15px] items-center justify-center rounded-[2px] border border-[#d7e0f5] bg-[#c0d1f8]"><Chevron dir="down" /></button>
        </div>
      </div>
      <div className="mr-[18px]"><SheetTabs /></div>
    </div>
    <div className="ml-[1px] border-l border-white"><SideBar tools={modifyTools} /></div>
  </main>
);

const CommandLine: React.FC = () => (
  <section className="shrink-0 border-t-2 border-white pb-[2px]">
    <div className="mt-[4px] border-t-2 border-black" />
    <div className="mt-[4px] flex h-[49px] pl-[4px]">
      <Grip />
      <div className="flex-1 border-t-2 border-l-2 border-black bg-white text-[13px] leading-[14px]">
        <div className="h-[31px] border-b border-[#9b9b9b] pt-px pl-px">
          <p><Mixed text="正在重生成模型。" cjk="text-[15px]" /></p>
          <p><Mixed text="AutoCAD 菜单实用程序已加载。" cjk="text-[15px]" /></p>
        </div>
        <label className="flex items-center pl-px leading-[16px]">
          <span><span className="text-[14px]">命令</span>:</span>
          <input type="text" className="ml-[4px] h-[15px] min-w-0 flex-1 bg-transparent outline-none" />
        </label>
      </div>
    </div>
  </section>
);

const modes = [
  { name: '捕捉', on: false }, { name: '栅格', on: false }, { name: '正交', on: false }, { name: '极轴', on: true },
  { name: '对象捕捉', on: true }, { name: '对象追踪', on: true }, { name: '线宽', on: false }, { name: '模型', on: true },
];

const Balloon: React.FC = () => (
  <aside className="absolute right-[3px] bottom-[29px] w-[185px]">
    <div className="h-[74px] rounded-[14px] border-2 border-black bg-[#ffffe1] pt-[6px] pr-[6px] pl-[8px]">
      <div className="flex items-center">
        <svg width="16" height="17" viewBox="0 0 16 17">
          <path d="M8 1a7 6.500 0 0 1 2 12.500L9 16l-3-2.500A7 6.500 0 0 1 8 1z" fill="#e8f0fa" stroke="#7d9dc4" />
          <path d="M7 3h2v2H7zM6 6h3v5h1v1H6v-1h1V7H6z" fill="#1a4ab5" />
        </svg>
        <h2 className="ml-[10px] flex-1 text-[13px] leading-[16px] font-bold">通信中心</h2>
        <button type="button" aria-label="关闭通知" className="flex h-[16px] w-[16px] items-center justify-center border border-[#aca899] bg-[#ece9d8]">
          <svg width="9" height="9" viewBox="0 0 9 9" stroke="#000" strokeWidth="2"><path d="M1 1l7 7M8 1L1 8" /></svg>
        </button>
      </div>
      <p className="mt-[4px] pl-[6px] text-[12px] leading-[18px] whitespace-nowrap">使软件保持最新的简单方法。</p>
      <a href="#update" className="block pl-[6px] text-[12px] leading-[18px] text-[#0000d0] underline">单击此处。</a>
    </div>
    <svg width="40" height="18" viewBox="0 0 40 18" className="absolute top-[72px] right-[22px]">
      <path d="M1 0v2l34 15L20 1V0z" fill="#ffffe1" />
      <path d="M0 1.500L36 17 19 1.500" fill="none" stroke="#000" strokeWidth="1.500" />
    </svg>
  </aside>
);

const StatusBar: React.FC = () => (
  <footer className="relative flex h-[23px] shrink-0 items-center border-t-2 border-[#8b897b] pl-[4px]">
    <output className="h-[19px] w-[251px] border border-[#aca899] border-r-white border-b-white pt-[2px] pl-[2px] leading-[16px] text-[#aca899]">
      1654.63, 2362.58, 0.00
    </output>
    <div className="ml-[3px] flex gap-[4px]">
      {modes.map((mode) => (
        <button
          type="button"
          key={mode.name}
          aria-pressed={mode.on}
          className={`h-[19px] border px-px pt-[4px] text-[12px] leading-[13px] whitespace-nowrap ${mode.on ? 'border-t-black border-r-white border-b-white border-l-black bg-[#f5f3ea]' : 'border-t-white border-r-[#aca899] border-b-[#aca899] border-l-white'}`}
        >
          {mode.name}
        </button>
      ))}
    </div>
    <div className="ml-auto flex items-center gap-[8px] pr-[2px]">
      <button type="button" aria-label="通信中心" className="border border-[#aca899] border-r-white border-b-white">
        <svg width="20" height="16" viewBox="0 0 20 16">
          <path d="M3 14l5-8 4 7M5 3l7 4M4 6l6-5" stroke="#5b7391" strokeWidth="2" fill="none" />
          <path d="M13 3l6 12H7z" fill="#ffe11f" stroke="#8a7300" />
          <path d="M13 7v4M13 12v2" stroke="#000" strokeWidth="1.500" />
        </svg>
      </button>
      <svg width="8" height="5" viewBox="0 0 8 5"><path d="M0 0h8L4 4z" fill="#000" /></svg>
    </div>
    <Balloon />
  </footer>
);

const Dots: React.FC = () => (
  <svg width="6" height="24" viewBox="0 0 6 24" fill="#1542a8" className="shrink-0">
    <path d="M0 1h2v2H0zM3 4h2v2H3zM0 7h2v2H0zM3 10h2v2H3zM0 13h2v2H0zM3 16h2v2H3zM0 19h2v2H0zM3 22h2v2H3z" />
  </svg>
);

const paintArt = (
  <svg width="18" height="18" viewBox="0 0 18 18" className="shrink-0">
    <path d="M4 8l1 8c1 2 6 2 7 0l1-8z" fill="#b7c4d4" stroke="#66707d" />
    <path d="M5 9L3 3M9 9V3M11 9l3-6" stroke="#d9a25a" strokeWidth="2" />
    <path d="M2 1l2 1v3L2 4zM15 1l-2 1v3l2-1zM8 1h2v3H8z" fill="#a8402b" />
    <path d="M8 10v6M11 10l-1 5" stroke="#5aa04c" strokeWidth="1.500" />
  </svg>
);

const tasks = [
  {
    title: '室内人-室内设...',
    active: false,
    art: (
      <svg width="18" height="18" viewBox="0 0 18 18" className="shrink-0">
        <path d="M5 1h9l3 3v13H5z" fill="#fff" stroke="#b3c3d6" />
        <path d="M11 12.500A4 4 0 1 1 12 10H4" fill="none" stroke="#2a78d3" strokeWidth="2" />
        <path d="M2 14C1 9 9 3 13 5" stroke="#2a78d3" strokeWidth="1.300" fill="none" />
      </svg>
    ),
  },
  {
    title: '车',
    active: false,
    art: (
      <svg width="18" height="18" viewBox="0 0 18 18" className="shrink-0">
        <path d="M1 4h6l2 2h7v9H1z" fill="#e9b93c" stroke="#9c7518" />
        <path d="M3 8h14l-1 7H1z" fill="#ffe993" stroke="#b88e2b" />
      </svg>
    ),
  },
  { title: 'AutoCAD 2004 ...', active: true, art: <AppLogo /> },
  { title: '10 - 画图', active: false, art: paintArt },
];

const TaskBar: React.FC = () => (
  <div className="flex h-[34px] shrink-0 items-stretch bg-linear-to-b from-[#3f86ea] via-[#245edb] via-20% to-[#1c4fc4] text-white">
    <button type="button" className="mt-[4px] flex w-[96px] shrink-0 items-center gap-[4px] rounded-r-[10px] bg-linear-to-b from-[#5bb455] via-[#3c963b] via-25% to-[#2f8130] pl-[10px] shadow-[2px_0_2px_#173b8d]">
      <svg width="20" height="20" viewBox="0 0 20 20">
        <path d="M3 4c3-2 5-1 6 0L8 9c-2-1-4-1-6 0z" fill="#ee5a2a" />
        <path d="M10 4c3 2 5 1 8 0l-2 6c-2 1-4 1-7-1z" fill="#8ccb4a" />
        <path d="M2 10c2-1 4-1 6 0l-1 6c-2-1-4-1-6 0z" fill="#5f9df0" />
        <path d="M9 10c2 2 5 2 7 1l-2 6c-2 1-4 1-6-1z" fill="#fbc72e" />
      </svg>
      <span className="text-[18px] leading-[20px] italic [text-shadow:1px_1px_#1e5420]">开始</span>
    </button>
    <div className="mt-[4px] ml-[9px] flex w-[113px] shrink-0 items-center">
      <Dots />
      <button type="button" aria-label="媒体播放器" className="ml-[8px]">
        <svg width="17" height="17" viewBox="0 0 17 17"><rect width="17" height="17" rx="1" fill="#f3a64b" /><circle cx="8.500" cy="8.500" r="6.800" fill="#f7f7f5" stroke="#8a8a8a" /><path d="M6 4l7 4.500L6 13z" fill="#222" /></svg>
      </button>
      <button type="button" aria-label="显示桌面" className="ml-[6px]">
        <svg width="17" height="17" viewBox="0 0 17 17">
          <path d="M1 6l7 7 8-3v3l-8 3-7-7z" fill="#f2c52d" stroke="#725c12" />
          <path d="M1 6l7-3 8 6-8 4z" fill="#6fb2ee" stroke="#123a72" />
          <path d="M6 5L5 1l6 5" fill="#fff" stroke="#8fa9c9" />
        </svg>
      </button>
      <button type="button" aria-label="画图" className="ml-[6px]">{paintArt}</button>
      <span className="mb-[12px] ml-[12px] font-sans text-[14px] leading-[14px]">»</span>
      <div className="ml-auto"><Dots /></div>
    </div>
    <div className="mt-[5px] mb-[2px] flex min-w-0 flex-1 gap-[2px]">
      {tasks.map((task) => (
        <button
          type="button"
          key={task.title}
          className={`flex min-w-0 flex-1 items-center gap-[4px] rounded-[3px] pl-[9px] whitespace-nowrap ${task.active ? 'bg-[#1a48b0] shadow-[inset_1px_1px_2px_#0d2a7a]' : 'bg-linear-to-b from-[#5c9af8] via-[#3a7cf3] via-20% to-[#336fe8]'}`}
        >
          {task.art}
          <span><Mixed text={task.title} /></span>
        </button>
      ))}
    </div>
    <div className="mt-[4px] ml-[4px] flex shrink-0 items-center">
      <Dots />
      <span className="ml-[6px] text-[12px] text-[#a9c4f7]">桌面</span>
      <span className="mb-[12px] ml-[8px] font-sans text-[14px] leading-[14px] text-[#d5e2fb]">»</span>
      <div className="mr-[8px] ml-[7px]"><Dots /></div>
      <svg width="16" height="14" viewBox="0 0 16 14">
        <path d="M4 4c0-3 4 0 4-3" fill="none" stroke="#111" />
        <rect x="0.500" y="4.500" width="15" height="9" fill="#fffbe6" stroke="#111" />
        <path d="M2 7h12M2 9h12M4 11.500h8" stroke="#111" strokeDasharray="1 1" />
      </svg>
      <svg width="16" height="16" viewBox="0 0 16 16" className="ml-[7px]">
        <path d="M1 1h13v12h-2v2l-3-2H1z" fill="#ffffe4" stroke="#333" />
        <text x="7.500" y="12" textAnchor="middle" fontFamily="Liberation Sans, sans-serif" fontWeight="700" fontSize="12" fill="#111">?</text>
      </svg>
      <div className="ml-[9px] flex w-[12px] flex-col items-center gap-[6px]">
        <svg width="9" height="7" viewBox="0 0 9 7" fill="none" stroke="#fff"><path d="M2.500 2V.500h6v4H7M.500 2.500h6v4h-6z" /></svg>
        <svg width="6" height="4" viewBox="0 0 6 4"><path d="M0 0h6L3 3z" fill="#fff" /></svg>
      </div>
    </div>
    <div className="relative ml-[15px] flex w-[77px] shrink-0 items-center bg-linear-to-b from-[#36b0f3] via-[#1394ea] via-20% to-[#0f83d9] pt-[4px] pl-[9px]">
      <button type="button" aria-label="显示隐藏的图标" className="absolute top-[10px] left-[-9px] flex h-[17px] w-[17px] items-center justify-center rounded-full border border-[#a7d5fa] bg-[#2a86e0]">
        <svg width="7" height="9" viewBox="0 0 7 9" fill="none" stroke="#fff" strokeWidth="2"><path d="M5.500 1L2 4.500 5.500 8" /></svg>
      </button>
      <svg width="17" height="17" viewBox="0 0 17 17">
        <path d="M6 1h9v8H6z" fill="#23355e" stroke="#aeb9cf" />
        <path d="M1 5h9v8H1z" fill="#304578" stroke="#aeb9cf" />
        <path d="M3 15.500h6M11 11.500h4" stroke="#c5cbdd" strokeWidth="2" />
      </svg>
      <time className="ml-[8px]">12:41</time>
    </div>
  </div>
);

const App: React.FC = () => (
  <div className="flex min-h-screen w-full flex-col bg-[#ece9d8] font-['Liberation_Mono','Noto_Sans_CJK_SC',monospace] text-[10px] text-black">
    <TitleBar />
    <MenuBar />
    <StandardBar />
    <PropertyBar />
    <Workspace />
    <CommandLine />
    <StatusBar />
    <TaskBar />
  </div>
);

export default App;
